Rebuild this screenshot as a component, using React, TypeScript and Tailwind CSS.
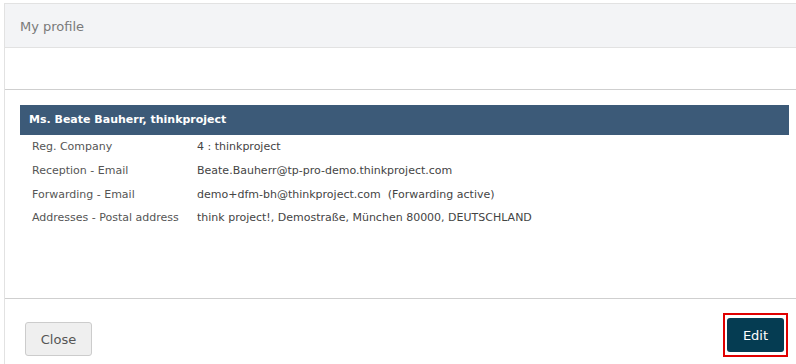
import React from "react";

const rows: { label: string; value: string; h: string }[] = [
  { label: "Reg. Company", value: "4 : thinkproject", h: "h-[24px]" },
  { label: "Reception - Email", value: "Beate.Bauherr@tp-pro-demo.thinkproject.com", h: "h-[25px]" },
  { label: "Forwarding - Email", value: "demo+dfm-bh@thinkproject.com\u00a0\u00a0(Forwarding active)", h: "h-[23px]" },
  { label: "Addresses - Postal address", value: "think project!, Demostraße, München 80000, DEUTSCHLAND", h: "h-[23px]" },
];

export default function App() {
  return (
    <div
      className="w-[796px] h-[364px] overflow-hidden bg-white"
      style={{ fontFamily: '"DejaVu Sans", Verdana, sans-serif' }}
    >
      <div className="ml-[4px] mt-[3px] w-[800px] border-l border-t border-[#e2e2e2] flex flex-col">
        {/* Header */}
        <div className="h-[44px] bg-[#f3f4f6] border-b border-[#e2e2e2] flex items-center pl-[15px] pt-[3px]">
          <span className="text-[13px] text-[#7a7a7a]">My profile</span>
        </div>
        {/* White strip */}
        <div className="h-[42px] border-b border-[#cfcfcf]" />
        {/* Body */}
        <div className="h-[209px] border-b border-[#cfcfcf] pt-[15px] px-[15px]">
          <div className="h-[30px] bg-[#3c5a78] flex items-center pl-[9px] pt-[1px]">
            <span className="text-[11px] font-bold text-white">Ms. Beate Bauherr, thinkproject</span>
          </div>
          <div className="flex flex-col">
            {rows.map((r) => (
              <div key={r.label} className={`${r.h} flex items-center text-[11px]`}>
                <div className="w-[177px] pl-[12px] text-[#555]">{r.label}</div>
                <div className="text-[#444] whitespace-pre">{r.value}</div>
              </div>
            ))}
          </div>
        </div>
        {/* Footer */}
        <div className="h-[70px] flex items-start justify-between pl-[20px] pr-[16px] pt-[14px]">
          <button className="mt-[9px] w-[67px] h-[34px] pt-[2px] rounded-[3px] border border-[#cccccc] bg-[#efefef] text-[13px] text-[#555]">
            Close
          </button>
          <div className="border-2 border-[#e00000] px-[2px] py-[3px]">
            <button className="w-[57px] h-[34px] pt-[2px] rounded-[3px] bg-[#053c52] text-[13px] font-medium text-white">
              Edit
            </button>
          </div>
        </div>
      </div>
    </div>
  );
}
